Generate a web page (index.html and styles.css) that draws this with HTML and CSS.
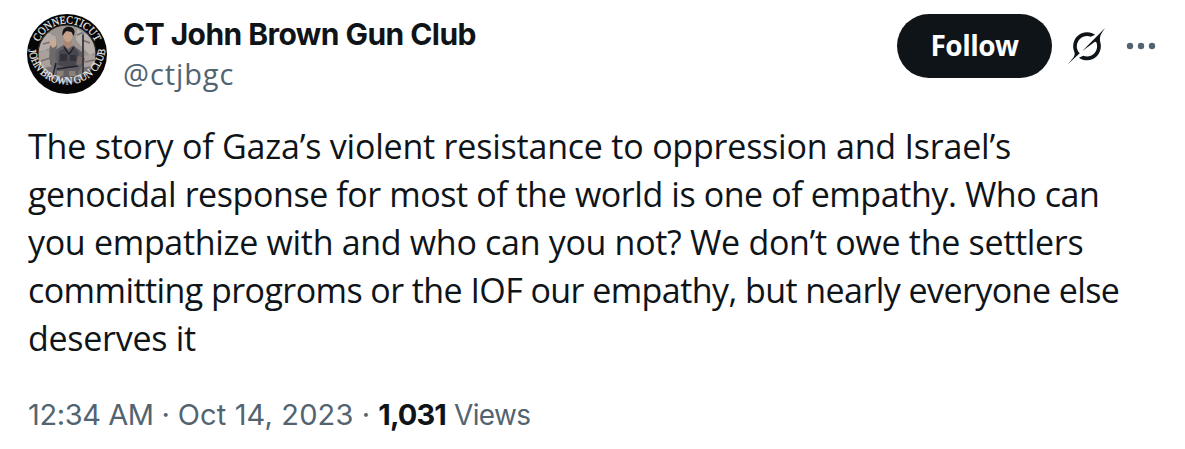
FILE: index.html
```html
<!DOCTYPE html>
<html lang="en">
<head>
  <meta charset="UTF-8">
  <meta name="viewport" content="width=device-width, initial-scale=1.0">
  <title>CT John Brown Gun Club</title>
  <link rel="stylesheet" href="styles.css">
</head>
<body>

<article class="post">
  <header class="post-header">
    <svg class="avatar" viewBox="0 0 80 80" width="80" height="80">
      <defs>
        <path id="arc-top" d="M9.500 40a30.500 30.500 0 0 1 61 0"/>
        <path id="arc-bottom" d="M1.700 36a38.500 38.500 0 0 0 76.600 0"/>
        <clipPath id="inner"><circle cx="40" cy="40" r="29"/></clipPath>
      </defs>
      <circle cx="40" cy="40" r="40" fill="#060606"/>
      <g clip-path="url(#inner)">
        <rect width="80" height="80" fill="#9b9490"/>
        <!-- clouds -->
        <path d="M8 28l12-10 9 5-3 9-8 4-10 3z" fill="#b4aca8"/>
        <path d="M50 15l13 7 9 14-9 5-8-8-6-7z" fill="#b9b1ac"/>
        <path d="M10 40l9-4 7 6-3 10-11 1zM56 43l8-3 7 6-5 9-9-2z" fill="#aaa19e"/>
        <path d="M16 30l8-2M55 26l8 3M14 47l9-3M58 48l9-2M50 21l7-3" stroke="#77706f" stroke-width="1.500"/>
        <path d="M10 56l17-4 26 2 17-3v20H10z" fill="#777373"/>
        <!-- figure -->
        <path d="M30 35l8-5 9 2 8 6 1 13-5 7 1 16H27l2-19-6-5 2-12z" fill="#625f64"/>
        <path d="M22 45l1-14 4-3 3 4-2 10 2 7-4 4z" fill="#6e696b"/>
        <path d="M23 31l-1-6 2 2 1-4 2 3 2-2v8l-3 2z" fill="#c9aa95"/>
        <path d="M37 25h8v7l-4 3-4-4z" fill="#a98976"/>
        <ellipse cx="41" cy="22" rx="4.500" ry="6" fill="#c4a28c"/>
        <path d="M35.500 22c-1-8 4-10 8-9 4 1 5 5 3 9l-2-4-5-1-2 2z" fill="#171517"/>
        <path d="M32 37l6-3 4 5 6-5 4 5-2 12-9 3-10-3z" fill="#48474d"/>
        <path d="M33 40h7v7h-7zM43 41h6v6h-6z" fill="#32333a"/>
        <path d="M30 55l21-3M37 33l5 7 5-7M29 49l-3 12" stroke="#20212a" stroke-width="1.500" fill="none"/>
        <path d="M30 57h7l-1 5h-6zM42 57h6l1 5h-7z" fill="#8d8078"/>
        <path d="M51 42l7 2-1 6-8 1z" fill="#77696a"/>
        <path d="M56 19v46" stroke="#36383d" stroke-width="1.800"/>
        <path d="M54.500 15l2-4 1 9-2 1z" fill="#8798a4"/>
      </g>
      <circle cx="40" cy="40" r="29" fill="none" stroke="#2c2a29" stroke-width="1.200"/>
      <text class="avatar-text"><textPath href="#arc-top" startOffset="50%" textLength="71" lengthAdjust="spacingAndGlyphs">CONNECTICUT</textPath></text>
      <text class="avatar-text"><textPath href="#arc-bottom" startOffset="50%" textLength="114" lengthAdjust="spacingAndGlyphs">JOHN BROWN GUN CLUB</textPath></text>
    </svg>

    <div class="author">
      <div class="name">CT John Brown Gun Club</div>
      <div class="handle">@ctjbgc</div>
    </div>

    <button type="button" class="follow">Follow</button>

    <svg class="grok" viewBox="0 0 33 32" width="37" height="36">
      <path fill="#0f1419" d="M12.745 20.540l10.970-8.190c.539-.4 1.307-.244 1.564.38 1.349 3.288.746 7.241-1.938 9.955-2.683 2.714-6.417 3.310-9.830 1.954l-3.728 1.745c5.347 3.697 11.840 2.782 15.898-1.324 3.219-3.255 4.216-7.692 3.284-11.693l.008.009c-1.351-5.878.332-8.227 3.782-13.031L33 0l-4.540 4.590v-.014L12.743 20.544m-2.263 1.987c-3.837-3.707-3.175-9.446.1-12.755 2.420-2.449 6.388-3.448 9.852-1.979l3.720-1.737c-.67-.49-1.530-1.017-2.515-1.387-4.455-1.854-9.789-.931-13.410 2.728-3.483 3.523-4.579 8.940-2.697 13.561 1.405 3.454-.899 5.898-3.220 8.364C1.490 30.200.666 31.074 0 32l10.478-9.466"/>
    </svg>

    <svg class="more" viewBox="0 0 30 8" width="30" height="8">
      <g fill="#536471">
        <circle cx="4" cy="4" r="3.200"/>
        <circle cx="15" cy="4" r="3.200"/>
        <circle cx="26" cy="4" r="3.200"/>
      </g>
    </svg>
  </header>

  <p class="post-text">
    <span class="line line-1">The story of Gaza’s violent resistance to oppression and Israel’s</span>
    <span class="line line-2">genocidal response for most of the world is one of empathy. Who can</span>
    <span class="line line-3">you empathize with and who can you not? We don’t owe the settlers</span>
    <span class="line line-4">committing progroms or the IOF our empathy, but nearly everyone else</span>
    <span class="line line-5">deserves it</span>
  </p>

  <footer class="post-meta">
    <span class="date"><span class="time">12:34 AM ·</span> Oct 14, 2023 ·</span>
    <span class="count">1,031</span>
    <span class="views">Views</span>
  </footer>
</article>

</body>
</html>
```
FILE: styles.css
```css
body {
  margin: 0;
  background: #fff;
  color: #0f1419;
  font-family: "Open Sans", sans-serif;
}
.post {
  padding: 14px 28px 0 27px;
}
.post-header {
  display: flex;
  height: 80px;
}
.avatar {
  flex: none;
  margin-right: 16px;
}
.avatar-text {
  font-family: "Liberation Serif", serif;
  font-size: 11px;
  fill: #efefef;
  stroke: #efefef;
  stroke-width: 0.2px;
  text-anchor: middle;
}
.author {
  flex: 1;
  line-height: 40px;
  white-space: nowrap;
}
.name {
  font-family: Inter, sans-serif;
  font-size: 30px;
  font-weight: 700;
  letter-spacing: -0.56px;
}
.handle {
  color: #536471;
  font-size: 29px;
  letter-spacing: 0.9px;
}
.follow {
  width: 155px;
  height: 64px;
  padding: 0 0 2px;
  border: 0;
  border-radius: 32px;
  background: #0f1419;
  color: #fff;
  font-family: "Open Sans", sans-serif;
  font-size: 28px;
  font-weight: 700;
  letter-spacing: -0.5px;
}
.grok {
  margin: 14px 0 0 16px;
}
.more {
  margin: 28px 1px 0 21px;
}
.post-text {
  margin: 28px 0 0 1px;
  font-size: 34px;
  line-height: 48px;
}
.line {
  display: block;
  width: max-content;
  white-space: nowrap;
}
.line-1 {
  letter-spacing: -0.21px;
}
.line-2 {
  letter-spacing: -0.42px;
}
.line-3 {
  letter-spacing: -0.31px;
}
.line-4 {
  letter-spacing: -0.57px;
}
.line-5 {
  letter-spacing: -0.27px;
}
.post-meta {
  display: flex;
  gap: 8px;
  margin: 33px 0 0 1px;
  color: #536471;
  font-family: Inter, sans-serif;
  font-size: 29px;
  line-height: 40px;
  white-space: nowrap;
}
.date {
  letter-spacing: 0.15px;
}
.time {
  letter-spacing: -0.4px;
}
.count {
  color: #0f1419;
  font-weight: 700;
  letter-spacing: -0.9px;
}
.views {
  font-size: 28px;
  letter-spacing: -0.6px;
}
```
